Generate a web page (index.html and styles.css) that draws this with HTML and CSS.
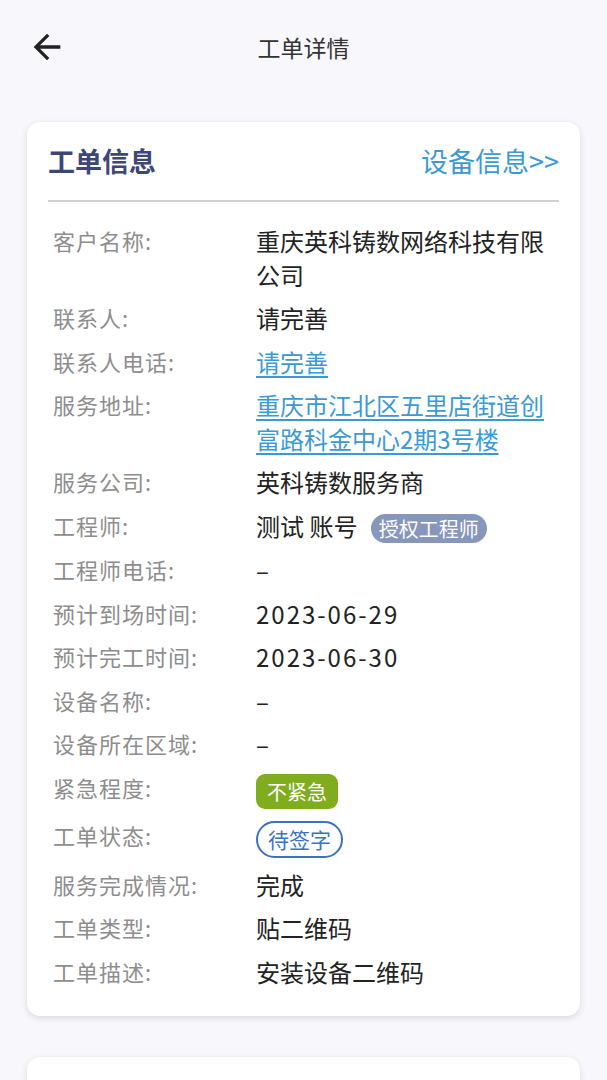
FILE: index.html
```html
<!DOCTYPE html>
<html lang="zh-CN">
  <head>
    <meta charset="UTF-8" />
    <meta name="viewport" content="width=device-width, initial-scale=1.0" />
    <title>工单详情</title>
    <link rel="stylesheet" href="styles.css">
  </head>
  <body>
    <div class="page">
      <div class="top-bar">
        <button class="back-btn" aria-label="返回">
          <svg viewBox="0 0 24 24" width="40" height="40">
            <path d="M20 11H7.83l5.59-5.59L12 4l-8 8 8 8 1.41-1.41L7.83 13H20v-2z" fill="#222"/>
          </svg>
        </button>
        <h1 class="top-title">工单详情</h1>
        <span></span>
      </div>

      <div class="card">
        <div class="card-head">
          <h2 class="card-title">工单信息</h2>
          <a class="card-link">设备信息&gt;&gt;</a>
        </div>

        <!-- info rows -->
        <div class="info-list">
          <div class="info-row">
            <span class="label">客户名称:</span>
            <span class="value">重庆英科铸数网络科技有限公司</span>
          </div>
          <div class="info-row">
            <span class="label">联系人:</span>
            <span class="value">请完善</span>
          </div>
          <div class="info-row">
            <span class="label">联系人电话:</span>
            <span class="value"><a class="link">请完善</a></span>
          </div>
          <div class="info-row">
            <span class="label">服务地址:</span>
            <span class="value"><a class="link">重庆市江北区五里店街道创富路科金中心2期3号楼</a></span>
          </div>
          <div class="info-row">
            <span class="label">服务公司:</span>
            <span class="value">英科铸数服务商</span>
          </div>
          <div class="info-row">
            <span class="label">工程师:</span>
            <span class="value">测试 账号 <span class="tag tag-gray">授权工程师</span></span>
          </div>
          <div class="info-row">
            <span class="label">工程师电话:</span>
            <span class="value">–</span>
          </div>
          <div class="info-row">
            <span class="label">预计到场时间:</span>
            <span class="value num">2023-06-29</span>
          </div>
          <div class="info-row">
            <span class="label">预计完工时间:</span>
            <span class="value num">2023-06-30</span>
          </div>
          <div class="info-row">
            <span class="label">设备名称:</span>
            <span class="value">–</span>
          </div>
          <div class="info-row">
            <span class="label">设备所在区域:</span>
            <span class="value">–</span>
          </div>
          <div class="info-row">
            <span class="label">紧急程度:</span>
            <span class="value"><span class="tag tag-green">不紧急</span></span>
          </div>
          <div class="info-row">
            <span class="label">工单状态:</span>
            <span class="value"><span class="tag tag-outline">待签字</span></span>
          </div>
          <div class="info-row">
            <span class="label">服务完成情况:</span>
            <span class="value">完成</span>
          </div>
          <div class="info-row">
            <span class="label">工单类型:</span>
            <span class="value">贴二维码</span>
          </div>
          <div class="info-row">
            <span class="label">工单描述:</span>
            <span class="value">安装设备二维码</span>
          </div>
        </div>
      </div>

      <div class="card card-next"></div>
    </div>
  </body>
</html>
```

FILE: styles.css
```css
* {
  margin: 0;
  padding: 0;
  box-sizing: border-box;
}

body {
  background: #f7f7fc;
  font-family: "Noto Sans CJK SC", "Noto Sans", sans-serif;
  color: #222;
}

.page {
  padding: 0 27px;
}

.top-bar {
  display: grid;
  grid-template-columns: 1fr auto 1fr;
  align-items: center;
  height: 94px;
}

.back-btn {
  display: flex;
  width: 40px;
  height: 40px;
  border: none;
  background: none;
}

.top-title {
  font-size: 23px;
  font-weight: 400;
  color: #333;
}

.card {
  margin-top: 28px;
  background: #fff;
  border-radius: 13px;
  box-shadow: 0 2px 6px rgba(0, 0, 0, 0.13);
  padding: 20px 21px 28px;
}

.card-head {
  display: flex;
  justify-content: space-between;
  align-items: center;
  height: 60px;
  padding-bottom: 22px;
  border-bottom: 2px solid #cfcfd4;
}

.card-title {
  font-size: 27px;
  font-weight: 700;
  color: #3c4777;
}

.card-link {
  font-size: 27px;
  color: #3b9ad4;
}

.info-list {
  display: flex;
  flex-direction: column;
  gap: 10px;
  padding: 22px 0 0 5px;
}

.info-row {
  display: flex;
  align-items: center;
  line-height: 33.5px;
}

.label {
  flex: 0 0 203px;
  align-self: flex-start;
  font-size: 22px;
  letter-spacing: 1px;
  color: #8d8d8d;
}

.value {
  flex: 1;
  font-size: 24px;
  color: #222;
}

.num {
  letter-spacing: 2px;
}

.link {
  color: #3b9ad4;
  text-decoration: underline;
  text-underline-offset: 4px;
}

.tag {
  display: inline-block;
  vertical-align: middle;
  color: #fff;
}

.tag-gray {
  margin-left: 8px;
  padding: 0 8px;
  font-size: 20px;
  line-height: 29px;
  border-radius: 15px;
  background: #8796bb;
}

.tag-green {
  padding: 0 11px;
  font-size: 20px;
  line-height: 35px;
  border-radius: 9px;
  background: #80ad1e;
}

.tag-outline {
  padding: 0 10px;
  font-size: 21px;
  line-height: 33px;
  border: 2px solid #3b73bf;
  border-radius: 20px;
  color: #3b73bf;
}

.card-next {
  margin-top: 41px;
  height: 200px;
}
```
